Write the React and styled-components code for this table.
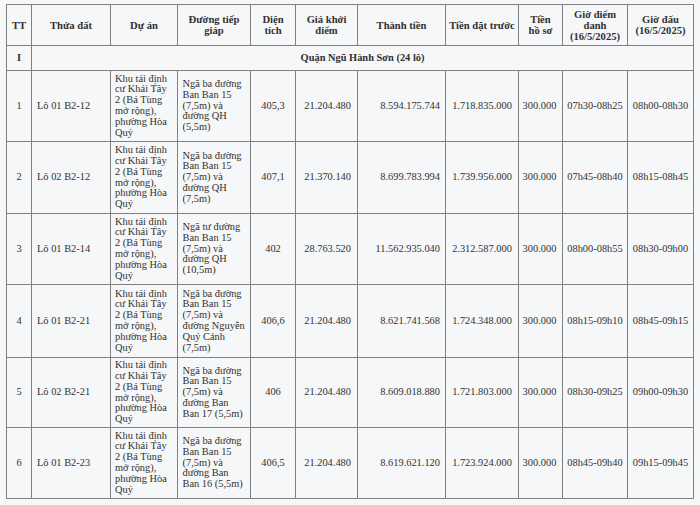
import React from 'react';
import styled, { createGlobalStyle } from 'styled-components';

const GlobalStyle = createGlobalStyle`
  html, body {
    margin: 0;
    padding: 0;
    background: #f6f7f8;
  }
`;

const Page = styled.div`
  width: 700px;
  height: 505px;
  overflow: hidden;
  padding: 4px 0 0 6px;
  box-sizing: border-box;
  font-family: 'Liberation Serif', 'Times New Roman', serif;
  color: #313131;
`;

const Sheet = styled.table`
  width: 687px;
  table-layout: fixed;
  border-collapse: collapse;
  font-size: 10.4px;
  line-height: 10.8px;
`;

const Row = styled.tr`
  height: ${({ $h }) => $h}px;
`;

const HeadCell = styled.th`
  border: 1px solid #808080;
  padding: 0 2px;
  font-weight: bold;
  font-size: 10.6px;
  line-height: 11px;
  text-align: center;
  vertical-align: middle;
  white-space: nowrap;
`;

const Cell = styled.td`
  border: 1px solid #808080;
  padding: 0 ${({ $pr }) => $pr ?? 4}px 0 ${({ $pl }) => $pl ?? 4}px;
  text-align: ${({ $align }) => $align || 'left'};
  font-weight: ${({ $bold }) => ($bold ? 'bold' : 'normal')};
  vertical-align: middle;
  white-space: nowrap;
  overflow: visible;
`;

const cols = [25, 79, 67, 73, 45, 62, 88, 73, 44, 65, 66];

const headers = [
  ['TT'],
  ['Thửa đất'],
  ['Dự án'],
  ['Đường tiếp', 'giáp'],
  ['Diện', 'tích'],
  ['Giá khởi', 'điểm'],
  ['Thành tiền'],
  ['Tiền đặt trước'],
  ['Tiền', 'hồ sơ'],
  ['Giờ điểm', 'danh', '(16/5/2025)'],
  ['Giờ đấu', '(16/5/2025)'],
];

const project = [
  'Khu tái định',
  'cư Khái Tây',
  '2 (Bá Tùng',
  'mở rộng),',
  'phường Hòa',
  'Quý',
];

const rows = [
  {
    tt: 1,
    lot: 'Lô 01 B2-12',
    road: ['Ngã ba đường', 'Ban Ban 15', '(7,5m) và', 'đường QH', '(5,5m)'],
    area: '405,3',
    start: '21.204.480',
    total: '8.594.175.744',
    deposit: '1.718.835.000',
    checkin: '07h30-08h25',
    auction: '08h00-08h30',
    h: 71,
  },
  {
    tt: 2,
    lot: 'Lô 02 B2-12',
    road: ['Ngã ba đường', 'Ban Ban 15', '(7,5m) và', 'đường QH', '(7,5m)'],
    area: '407,1',
    start: '21.370.140',
    total: '8.699.783.994',
    deposit: '1.739.956.000',
    checkin: '07h45-08h40',
    auction: '08h15-08h45',
    h: 72,
  },
  {
    tt: 3,
    lot: 'Lô 01 B2-14',
    road: ['Ngã tư đường', 'Ban Ban 15', '(7,5m) và', 'đường QH', '(10,5m)'],
    area: '402',
    start: '28.763.520',
    total: '11.562.935.040',
    deposit: '2.312.587.000',
    checkin: '08h00-08h55',
    auction: '08h30-09h00',
    h: 71,
  },
  {
    tt: 4,
    lot: 'Lô 01 B2-21',
    road: [
      'Ngã ba đường',
      'Ban Ban 15',
      '(7,5m) và',
      'đường Nguyễn',
      'Quý Cảnh',
      '(7,5m)',
    ],
    area: '406,6',
    start: '21.204.480',
    total: '8.621.741.568',
    deposit: '1.724.348.000',
    checkin: '08h15-09h10',
    auction: '08h45-09h15',
    h: 73,
  },
  {
    tt: 5,
    lot: 'Lô 02 B2-21',
    road: ['Ngã ba đường', 'Ban Ban 15', '(7,5m) và', 'đường Ban', 'Ban 17 (5,5m)'],
    area: '406',
    start: '21.204.480',
    total: '8.609.018.880',
    deposit: '1.721.803.000',
    checkin: '08h30-09h25',
    auction: '09h00-09h30',
    h: 70,
  },
  {
    tt: 6,
    lot: 'Lô 01 B2-23',
    road: ['Ngã ba đường', 'Ban Ban 15', '(7,5m) và', 'đường Ban', 'Ban 16 (5,5m)'],
    area: '406,5',
    start: '21.204.480',
    total: '8.619.621.120',
    deposit: '1.723.924.000',
    checkin: '08h45-09h40',
    auction: '09h15-09h45',
    h: 71,
  },
];

const Lines = ({ lines }) =>
  lines.map((l, i) => (
    <React.Fragment key={i}>
      {i > 0 && <br />}
      {l}
    </React.Fragment>
  ));

const LotRow = ({ row }) => (
  <Row $h={row.h}>
    <Cell $align="center" $pl={0} $pr={0}>
      {row.tt}
    </Cell>
    <Cell $pl={5}>{row.lot}</Cell>
    <Cell>
      <Lines lines={project} />
    </Cell>
    <Cell $pl={4.5}>
      <Lines lines={row.road} />
    </Cell>
    <Cell $align="center">{row.area}</Cell>
    <Cell $align="right" $pr={6}>
      {row.start}
    </Cell>
    <Cell $align="right" $pr={5}>
      {row.total}
    </Cell>
    <Cell $align="center" $pl={0} $pr={0}>
      {row.deposit}
    </Cell>
    <Cell $align="center" $pl={0} $pr={2}>
      300.000
    </Cell>
    <Cell $align="center" $pl={0} $pr={0}>
      {row.checkin}
    </Cell>
    <Cell $align="center" $pl={0} $pr={0}>
      {row.auction}
    </Cell>
  </Row>
);

export default function App() {
  return (
    <Page>
      <GlobalStyle />
      <Sheet>
        <colgroup>
          {cols.map((w, i) => (
            <col key={i} style={{ width: w }} />
          ))}
        </colgroup>
        <thead>
          <Row $h={41}>
            {headers.map((h, i) => (
              <HeadCell key={i}>
                <Lines lines={h} />
              </HeadCell>
            ))}
          </Row>
        </thead>
        <tbody>
          <Row $h={25}>
            <Cell $align="center" $bold $pl={0} $pr={0}>
              I
            </Cell>
            <Cell colSpan={10} $align="center" $bold>
              Quận Ngũ Hành Sơn (24 lô)
            </Cell>
          </Row>
          {rows.map((r) => (
            <LotRow key={r.tt} row={r} />
          ))}
        </tbody>
      </Sheet>
    </Page>
  );
}
